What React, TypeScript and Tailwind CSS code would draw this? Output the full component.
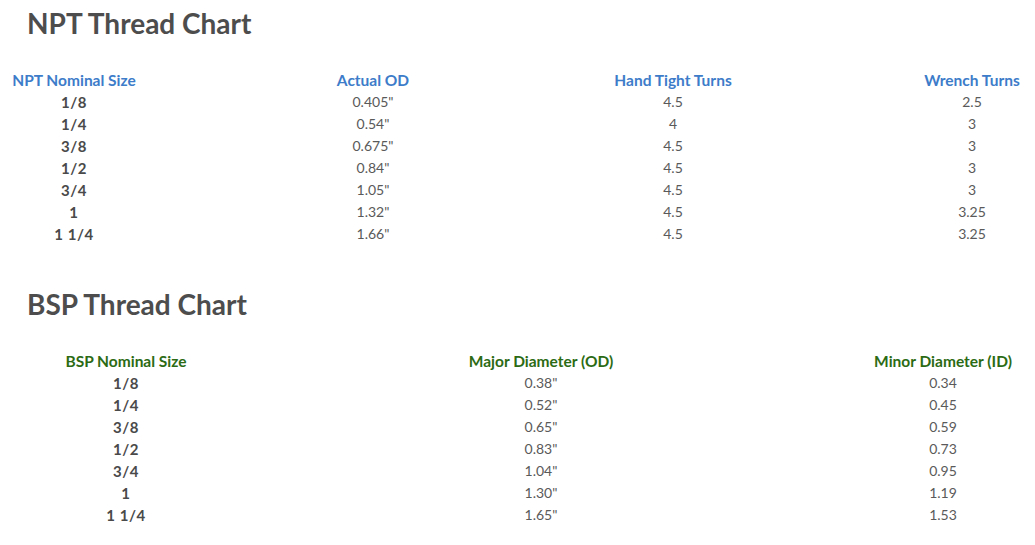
import React from 'react';

const npt = [
  ['1/8', '0.405"', '4.5', '2.5'],
  ['1/4', '0.54"', '4', '3'],
  ['3/8', '0.675"', '4.5', '3'],
  ['1/2', '0.84"', '4.5', '3'],
  ['3/4', '1.05"', '4.5', '3'],
  ['1', '1.32"', '4.5', '3.25'],
  ['1 1/4', '1.66"', '4.5', '3.25'],
];

const bsp = [
  ['1/8', '0.38"', '0.34'],
  ['1/4', '0.52"', '0.45'],
  ['3/8', '0.65"', '0.59'],
  ['1/2', '0.83"', '0.73'],
  ['3/4', '1.04"', '0.95'],
  ['1', '1.30"', '1.19'],
  ['1 1/4', '1.65"', '1.53'],
];

export default function App() {
  return (
    <div className="w-[1035px] h-[545px] overflow-hidden bg-white font-['Lato','Liberation_Sans',sans-serif] text-[14px]">
      {/* NPT */}
      <h2 className="pt-[5px] pl-[27px] h-[41px] text-[28px] leading-[36px] font-bold text-[#4d4d4d]">NPT Thread Chart</h2>
      <div className="mt-[28px] grid grid-cols-[148px_102px_150px_100px] gap-x-[174px] text-center leading-[22px] whitespace-nowrap">
        <HeadCell color="text-[#3d7cc9]">NPT Nominal Size</HeadCell>
        <HeadCell color="text-[#3d7cc9]">Actual OD</HeadCell>
        <HeadCell color="text-[#3d7cc9]">Hand Tight Turns</HeadCell>
        <HeadCell color="text-[#3d7cc9]">Wrench Turns</HeadCell>
        {npt.map((r) => (
          <React.Fragment key={r[0]}>
            <div className="font-bold text-[15px] text-[#4a4a4a] tracking-[0.6px]">{r[0]}</div>
            <div className="text-[#5a5a5a]">{r[1]}</div>
            <div className="text-[#5a5a5a]">{r[2]}</div>
            <div className="text-[#5a5a5a]">{r[3]}</div>
          </React.Fragment>
        ))}
      </div>

      {/* BSP */}
      <h2 className="mt-[41px] pl-[27px] h-[36px] text-[28px] leading-[36px] font-bold text-[#4d4d4d]">BSP Thread Chart</h2>
      <div className="mt-[28px] ml-[22px] grid grid-cols-[208px_160px_182px] gap-x-[231px] text-center leading-[22px] whitespace-nowrap">
        <HeadCell color="text-[#2c6b14]">BSP Nominal Size</HeadCell>
        <HeadCell color="text-[#2c6b14]">Major Diameter (OD)</HeadCell>
        <HeadCell color="text-[#2c6b14]">Minor Diameter (ID)</HeadCell>
        {bsp.map((r) => (
          <React.Fragment key={r[0]}>
            <div className="font-bold text-[15px] text-[#4a4a4a] tracking-[0.6px]">{r[0]}</div>
            <div className="text-[#5a5a5a]">{r[1]}</div>
            <div className="text-[#5a5a5a]">{r[2]}</div>
          </React.Fragment>
        ))}
      </div>
    </div>
  );
}

function HeadCell({ children, color }: any) {
  return <div className={`font-bold text-[15.5px] ${color}`}>{children}</div>;
}
